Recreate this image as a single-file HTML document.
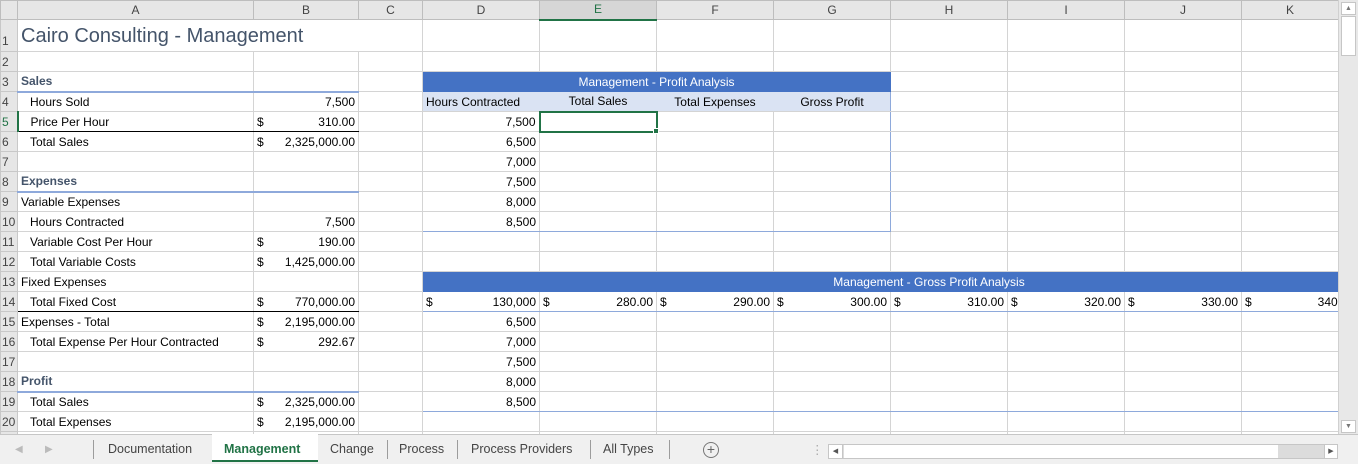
<!DOCTYPE html>
<html><head><meta charset="utf-8"><style>
*{margin:0;padding:0;box-sizing:border-box}
body{width:1358px;height:464px;overflow:hidden;background:#fff;font-family:"Liberation Sans",sans-serif;font-size:12px;color:#000;position:relative}
#grid{position:absolute;left:0;top:0;width:1338px;height:434px;overflow:hidden}
table{border-collapse:collapse;table-layout:fixed;width:1338px}
td{border:1px solid #d4d4d4;height:20px;padding:0 3px;white-space:nowrap;overflow:hidden;line-height:18px}
tr.h td{background:#e6e6e6;color:#444;text-align:center;height:19px;line-height:17px;border-color:#bdbdbd;font-size:12px}
td.rh{background:#e6e6e6;color:#444;text-align:left;padding:0 0 0 1px;border-color:#c8c8c8;font-size:12px}
.r{text-align:right}
.c{text-align:center}
.in{padding-left:12px}
.sec{color:#44546a;font-weight:bold;font-size:12px}
.m div{display:flex;justify-content:space-between}
.blue{background:#4472c4;color:#fff;text-align:center;border-color:#4472c4}
.lb{background:#dae3f3;border-left-color:#dae3f3;border-right-color:#dae3f3}
.bb{border-bottom:2px solid #8ea9db}
.kb{border-bottom:1px solid #000}
.tb{border-bottom:1px solid #8ea9db}
#tabs{position:absolute;left:0;top:434px;width:1358px;height:30px;background:#f0f0f0;border-top:1px solid #c6c6c6;font-size:12.5px;color:#444}
#tabs span{position:absolute;top:7px}
.sep{position:absolute;top:5px;width:1px;height:19px;background:#9c9c9c}
#vs{position:absolute;left:1338px;top:0;width:20px;height:434px;background:#e8e8e8;border-left:1px solid #d0d0d0}
</style></head><body>
<div id="grid">
<table>
<colgroup><col style="width:17px"><col style="width:236px"><col style="width:105px"><col style="width:64px"><col style="width:117px"><col style="width:117px"><col style="width:117px"><col style="width:117px"><col style="width:117px"><col style="width:117px"><col style="width:117px"><col style="width:97px"></colgroup>
<tr class="h" style="height:19px"><td></td><td>A</td><td>B</td><td>C</td><td>D</td><td style="border-bottom:2px solid #217346;background:#d6d6d6;color:#217346">E</td><td>F</td><td>G</td><td>H</td><td>I</td><td>J</td><td>K</td></tr>
<tr style="height:32px"><td class="rh" style="height:32px;padding-top:10px">1</td><td colspan="3" style="height:32px;font-size:20px;color:#44546a;overflow:visible;padding-left:3px">Cairo Consulting - Management</td><td></td><td></td><td></td><td></td><td></td><td></td><td></td><td></td></tr>
<tr><td class="rh">2</td><td></td><td></td><td></td><td></td><td></td><td></td><td></td><td></td><td></td><td></td><td></td></tr>
<tr><td class="rh">3</td><td class="sec bb">Sales</td><td class="bb"></td><td></td><td colspan="4" class="blue">Management - Profit Analysis</td><td></td><td></td><td></td><td></td></tr>
<tr><td class="rh">4</td><td class="in">Hours Sold</td><td class="r">7,500</td><td></td><td class="lb" style="border-left-color:#8ea9db">Hours Contracted</td><td class="lb c">Total Sales</td><td class="lb c">Total Expenses</td><td class="lb c" style="border-right-color:#8ea9db">Gross Profit</td><td></td><td></td><td></td><td></td></tr>
<tr><td class="rh" style="color:#217346;border-right:2px solid #217346">5</td><td class="in kb">Price Per Hour</td><td class="m kb"><div><span>$</span><span>310.00</span></div></td><td></td><td class="r" style="border-left-color:#8ea9db">7,500</td><td style="border:2px solid #217346"></td><td></td><td style="border-right-color:#8ea9db"></td><td></td><td></td><td></td><td></td></tr>
<tr><td class="rh">6</td><td class="in">Total Sales</td><td class="m"><div><span>$</span><span>2,325,000.00</span></div></td><td></td><td class="r" style="border-left-color:#8ea9db">6,500</td><td></td><td></td><td style="border-right-color:#8ea9db"></td><td></td><td></td><td></td><td></td></tr>
<tr><td class="rh">7</td><td></td><td></td><td></td><td class="r" style="border-left-color:#8ea9db">7,000</td><td></td><td></td><td style="border-right-color:#8ea9db"></td><td></td><td></td><td></td><td></td></tr>
<tr><td class="rh">8</td><td class="sec bb">Expenses</td><td class="bb"></td><td></td><td class="r" style="border-left-color:#8ea9db">7,500</td><td></td><td></td><td style="border-right-color:#8ea9db"></td><td></td><td></td><td></td><td></td></tr>
<tr><td class="rh">9</td><td>Variable Expenses</td><td></td><td></td><td class="r" style="border-left-color:#8ea9db">8,000</td><td></td><td></td><td style="border-right-color:#8ea9db"></td><td></td><td></td><td></td><td></td></tr>
<tr><td class="rh">10</td><td class="in">Hours Contracted</td><td class="r">7,500</td><td></td><td class="r tb" style="border-left-color:#8ea9db">8,500</td><td class="tb"></td><td class="tb"></td><td class="tb" style="border-right-color:#8ea9db"></td><td></td><td></td><td></td><td></td></tr>
<tr><td class="rh">11</td><td class="in">Variable Cost Per Hour</td><td class="m"><div><span>$</span><span>190.00</span></div></td><td></td><td></td><td></td><td></td><td></td><td></td><td></td><td></td><td></td></tr>
<tr><td class="rh">12</td><td class="in">Total Variable Costs</td><td class="m"><div><span>$</span><span>1,425,000.00</span></div></td><td></td><td></td><td></td><td></td><td></td><td></td><td></td><td></td><td></td></tr>
<tr><td class="rh">13</td><td>Fixed Expenses</td><td></td><td></td><td colspan="8" class="blue" style="padding-left:100px">Management - Gross Profit Analysis</td></tr>
<tr><td class="rh">14</td><td class="in kb">Total Fixed Cost</td><td class="m kb"><div><span>$</span><span>770,000.00</span></div></td><td></td><td class="m tb" style="border-left-color:#8ea9db"><div><span>$</span><span>130,000</span></div></td><td class="m tb"><div><span>$</span><span>280.00</span></div></td><td class="m tb"><div><span>$</span><span>290.00</span></div></td><td class="m tb"><div><span>$</span><span>300.00</span></div></td><td class="m tb"><div><span>$</span><span>310.00</span></div></td><td class="m tb"><div><span>$</span><span>320.00</span></div></td><td class="m tb"><div><span>$</span><span>330.00</span></div></td><td class="m tb"><div><span>$</span><span style="margin-right:-6px">340.</span></div></td></tr>
<tr><td class="rh">15</td><td>Expenses - Total</td><td class="m"><div><span>$</span><span>2,195,000.00</span></div></td><td></td><td class="r" style="border-left-color:#8ea9db">6,500</td><td></td><td></td><td></td><td></td><td></td><td></td><td></td></tr>
<tr><td class="rh">16</td><td class="in">Total Expense Per Hour Contracted</td><td class="m"><div><span>$</span><span>292.67</span></div></td><td></td><td class="r" style="border-left-color:#8ea9db">7,000</td><td></td><td></td><td></td><td></td><td></td><td></td><td></td></tr>
<tr><td class="rh">17</td><td></td><td></td><td></td><td class="r" style="border-left-color:#8ea9db">7,500</td><td></td><td></td><td></td><td></td><td></td><td></td><td></td></tr>
<tr><td class="rh">18</td><td class="sec bb">Profit</td><td class="bb"></td><td></td><td class="r" style="border-left-color:#8ea9db">8,000</td><td></td><td></td><td></td><td></td><td></td><td></td><td></td></tr>
<tr><td class="rh">19</td><td class="in">Total Sales</td><td class="m"><div><span>$</span><span>2,325,000.00</span></div></td><td></td><td class="r tb" style="border-left-color:#8ea9db">8,500</td><td class="tb"></td><td class="tb"></td><td class="tb"></td><td class="tb"></td><td class="tb"></td><td class="tb"></td><td class="tb"></td></tr>
<tr><td class="rh">20</td><td class="in">Total Expenses</td><td class="m"><div><span>$</span><span>2,195,000.00</span></div></td><td></td><td></td><td></td><td></td><td></td><td></td><td></td><td></td><td></td></tr>
<tr><td class="rh">21</td><td></td><td></td><td></td><td></td><td></td><td></td><td></td><td></td><td></td><td></td><td></td></tr>
</table>
<div style="position:absolute;left:653px;top:128px;width:6px;height:6px;background:#217346;border:1px solid #fff"></div>
</div>
<div id="vs">
<div style="position:absolute;left:2px;top:2px;width:15px;height:13px;background:#fff;border:1px solid #c6c6c6;font-size:7px;text-align:center;color:#777;line-height:11px">▲</div>
<div style="position:absolute;left:2px;top:16px;width:15px;height:40px;background:#fff;border:1px solid #c6c6c6"></div>
<div style="position:absolute;left:2px;top:420px;width:15px;height:13px;background:#fff;border:1px solid #c6c6c6;font-size:7px;text-align:center;color:#777;line-height:11px">▼</div>
</div>
<div id="tabs">
<span style="left:15px;color:#bbb;font-size:10px;top:9px">◀</span><span style="left:45px;color:#bbb;font-size:10px;top:9px">▶</span>
<div class="sep" style="left:93px"></div>
<span style="left:108px">Documentation</span>
<div style="position:absolute;left:212px;top:-1px;width:106px;height:28px;background:#fff;border-bottom:2px solid #217346"></div>
<span style="left:224px;color:#217346;font-weight:bold">Management</span>
<span style="left:330px">Change</span>
<div class="sep" style="left:387px"></div>
<span style="left:399px">Process</span>
<div class="sep" style="left:457px"></div>
<span style="left:471px">Process Providers</span>
<div class="sep" style="left:590px"></div>
<span style="left:603px">All Types</span>
<div class="sep" style="left:669px"></div>
<div style="position:absolute;left:703px;top:7px;width:16px;height:16px;border:1px solid #777;border-radius:50%;text-align:center;line-height:13px;font-size:14px;color:#666">+</div>
<span style="left:811px;color:#aaa">⋮</span>
<div style="position:absolute;left:828px;top:9px;width:510px;height:15px;background:#dcdcdc;border:1px solid #c6c6c6">
<div style="position:absolute;left:0;top:0;width:14px;height:13px;background:#fff;border-right:1px solid #c6c6c6;font-size:7px;line-height:13px;text-align:center;color:#555">◀</div>
<div style="position:absolute;left:15px;top:0;width:434px;height:13px;background:#fff"></div>
<div style="position:absolute;right:0;top:0;width:13px;height:13px;background:#fff;border-left:1px solid #c6c6c6;font-size:7px;line-height:13px;text-align:center;color:#555">▶</div>
</div>
</div>
</body></html>
